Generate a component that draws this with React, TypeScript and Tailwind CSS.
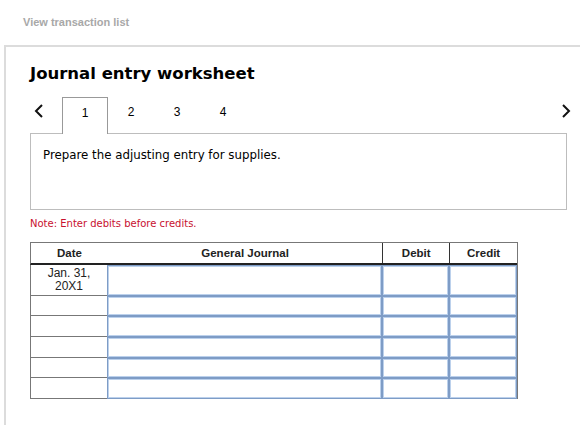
import React from 'react'

const rowHeights = [31, 20, 21, 21, 20, 21]

function Chevron({ dir }: { dir: 'left' | 'right' }) {
  return (
    <svg width="10" height="16" viewBox="0 0 10 16" className="block">
      {dir === 'left' ? (
        <path d="M8 2 L2 8 L8 14" fill="none" stroke="#111" strokeWidth="2" />
      ) : (
        <path d="M2 2 L8 8 L2 14" fill="none" stroke="#111" strokeWidth="2" />
      )}
    </svg>
  )
}

function InputCell({ w }: { w: string }) {
  return (
    <div
      className={`${w} h-full border border-[#7e9cc6] shadow-[inset_0_0_0_1px_#bcd1ec] bg-white`}
    />
  )
}

export default function App() {
  return (
    <div className="w-[580px] h-[425px] bg-white overflow-hidden font-['Liberation_Sans',Arial,sans-serif]">
      <div className="pt-[15px] pl-[23px] h-[45px] text-[11px] leading-[14px]">
        <span className="font-bold text-[#a8a8a8]">View transaction list</span>
      </div>

      <div className="ml-[4px] border-t-2 border-l-2 border-[#dcdcdc] h-[380px] pl-[24px] pt-[17px]">
        <h2 className="font-['DejaVu_Sans',Verdana,sans-serif] font-bold text-[16.5px] leading-[20px] text-black">
          Journal entry worksheet
        </h2>

        <div className="mt-[13px] flex items-end h-[36px] pr-[9px]">
          <div className="w-[32px] h-full flex items-start pt-[6px] pl-[4px]">
            <Chevron dir="left" />
          </div>
          <div className="w-[46px] h-[37px] -mb-px border border-b-0 border-[#999] bg-white relative z-10 flex items-start pt-[8px] justify-center text-[12px] leading-[14px] text-black">
            1
          </div>
          {['2', '3', '4'].map((n) => (
            <div key={n} className="w-[46px] h-full flex items-start pt-[8px] justify-center text-[12px] leading-[14px] text-black">
              {n}
            </div>
          ))}
          <div className="flex-1" />
          <div className="h-full flex items-start pt-[6px]">
            <Chevron dir="right" />
          </div>
        </div>

        <div className="w-[537px] h-[77px] border border-[#bdbdbd] pt-[13px] pl-[12px]">
          <p className="font-['DejaVu_Sans',Verdana,sans-serif] text-[11.8px] text-black">
            Prepare the adjusting entry for supplies.
          </p>
        </div>

        <p className="mt-[7px] font-['DejaVu_Sans',Verdana,sans-serif] text-[10px] leading-[14px] text-[#c8102e]">
          Note: Enter debits before credits.
        </p>

        <div className="mt-[11px] w-[488px] border-r border-[#777]">
          <div className="flex h-[23px] border-t border-l border-[#777] border-b-2 border-b-[#222] text-[11.5px] font-bold text-[#222]">
            <div className="w-[77px] flex items-center justify-center pt-px">Date</div>
            <div className="w-[275px] flex items-center justify-center pt-px">General Journal</div>
            <div className="w-[67px] border-l border-[#333] flex items-center justify-center pt-px">Debit</div>
            <div className="w-[68px] border-l border-[#333] flex items-center justify-center pt-px">Credit</div>
          </div>
          {rowHeights.map((h, i) => (
            <div key={i} className="flex" style={{ height: h }}>
              <div className="w-[77px] h-full border-l border-b border-[#777] text-[12px] leading-[13px] text-[#222] text-center pt-[2px]">
                {i === 0 ? (
                  <>
                    Jan. 31,
                    <br />
                    20X1
                  </>
                ) : null}
              </div>
              <InputCell w="w-[275px]" />
              <InputCell w="w-[67px]" />
              <InputCell w="w-[68px]" />
            </div>
          ))}
        </div>
      </div>
    </div>
  )
}
